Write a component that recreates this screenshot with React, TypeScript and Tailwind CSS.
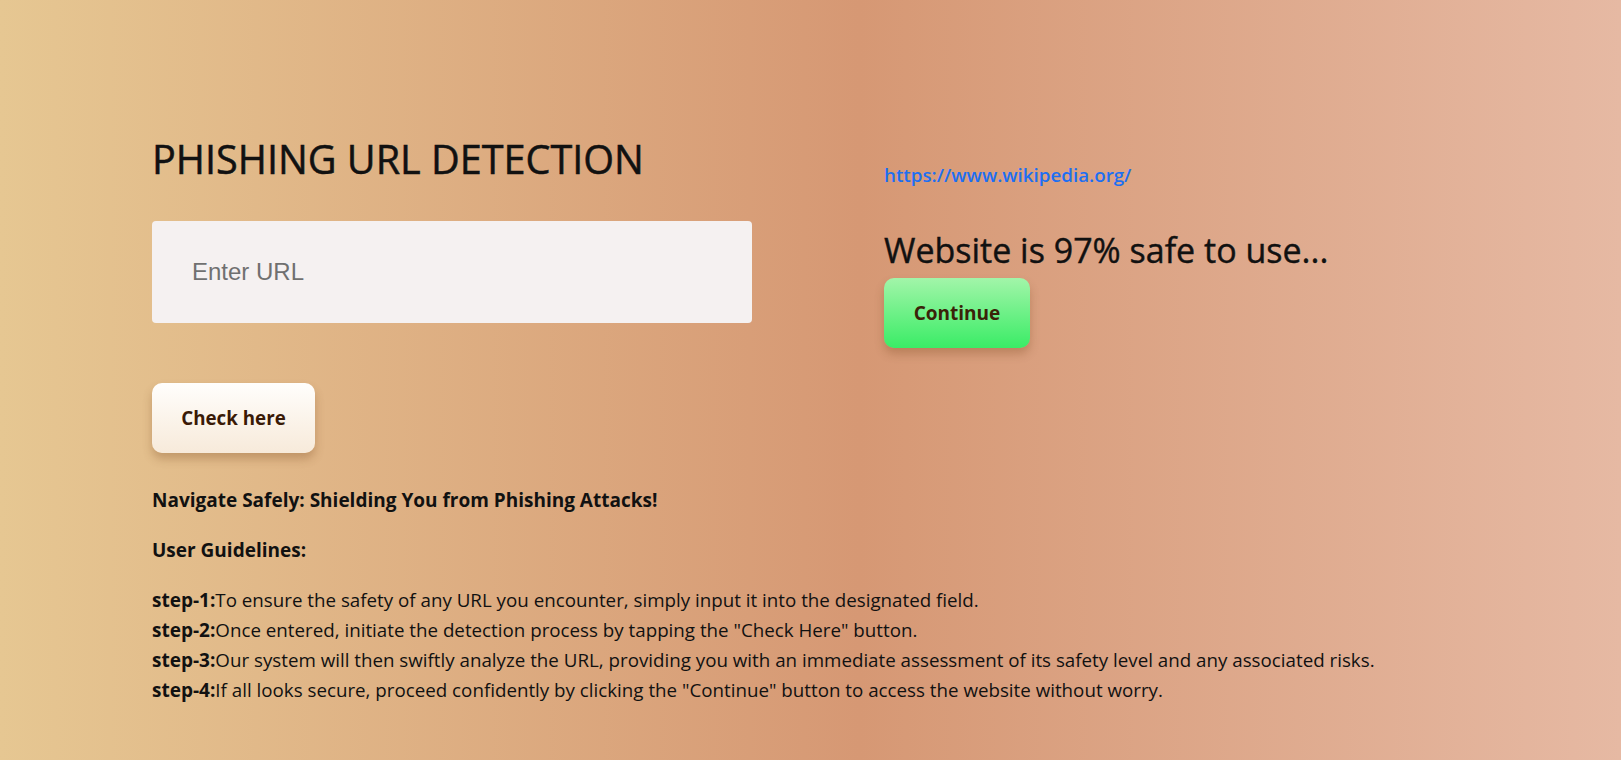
import React from 'react';

const STEPS = [
  ['step-1:', 'To ensure the safety of any URL you encounter, simply input it into the designated field.'],
  ['step-2:', 'Once entered, initiate the detection process by tapping the "Check Here" button.'],
  ['step-3:', 'Our system will then swiftly analyze the URL, providing you with an immediate assessment of its safety level and any associated risks.'],
  ['step-4:', 'If all looks secure, proceed confidently by clicking the "Continue" button to access the website without worry.'],
];

export default function App() {
  const [url, setUrl] = React.useState('');

  return (
    <div className="min-h-[760px] w-full bg-[linear-gradient(90deg,#e6c792_0%,#d69874_53%,#e6b9a3_100%)] font-['Open_Sans',sans-serif] text-[#111]">
      <div className="flex gap-[132px] px-[152px] pt-[131px]">
        <div className="flex w-[600px] flex-col">
          <h1 className="text-[39.6px] leading-[56px] font-normal [-webkit-text-stroke:0.5px_#111]">
            PHISHING URL DETECTION
          </h1>
          <input
            type="text"
            value={url}
            onChange={(event) => setUrl(event.target.value)}
            placeholder="Enter URL"
            className="mt-[34px] h-[102px] w-[600px] rounded bg-[#f5f1f1] px-[40px] font-['Liberation_Sans',sans-serif] text-[24px] text-[#222] outline-none placeholder:text-[#707070]"
          />
          <button
            type="button"
            className="mt-[60px] h-[70px] w-[163px] rounded-[10px] bg-[linear-gradient(180deg,#fffefc,#f7eada)] text-[18.75px] font-bold text-[#3a1a06] shadow-[0_6px_10px_rgba(120,70,30,0.3)]"
          >
            Check here
          </button>
        </div>

        <div className="flex flex-col pt-[31px]">
          <a href="#" className="text-[18.75px] font-semibold leading-[26px] text-[#1d6ff2]">
            https://www.wikipedia.org/
          </a>
          <h2 className="mt-[42px] text-[34px] leading-[40px] font-normal [-webkit-text-stroke:0.4px_#111]">
            Website is 97% safe to use...
          </h2>
          <button
            type="button"
            className="mt-[8px] h-[70px] w-[146px] rounded-[10px] bg-[linear-gradient(180deg,#a2f5a9,#3aec66)] text-[19px] font-bold text-[#3b2208] shadow-[0_6px_10px_rgba(120,70,30,0.3)]"
          >
            Continue
          </button>
        </div>
      </div>

      <div className="px-[152px] pt-[32px] pb-[40px] text-[18.75px] leading-[30px]">
        <p className="text-[19px] font-bold">Navigate Safely: Shielding You from Phishing Attacks!</p>
        <p className="mt-[20px] text-[19px] font-bold">User Guidelines:</p>
        <div className="mt-[20px]">
          {STEPS.map(([label, text]) => (
            <p key={label}>
              <span className="text-[19px] font-bold">{label}</span>
              {text}
            </p>
          ))}
        </div>
      </div>
    </div>
  );
}
